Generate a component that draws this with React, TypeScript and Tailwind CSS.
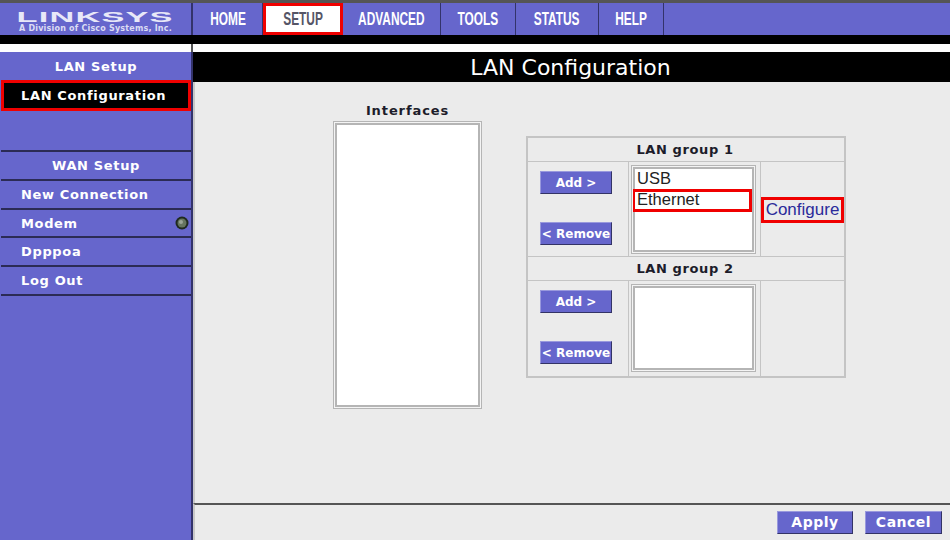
import React from 'react';

const navItems = [
  { label: 'HOME', width: 'w-[70px]' },
  { label: 'SETUP', width: 'w-[80px]', active: true },
  { label: 'ADVANCED', width: 'w-[98px]' },
  { label: 'TOOLS', width: 'w-[75px]' },
  { label: 'STATUS', width: 'w-[83px]' },
  { label: 'HELP', width: 'w-[65px]' },
];

const verdana = "font-['DejaVu_Sans',sans-serif] font-bold";

const PurpleButton = ({ label, className }: { label: string; className: string }) => (
  <div
    className={`${className} ${verdana} flex items-center justify-center bg-[#6666cc] border border-t-[#9999dd] border-l-[#9999dd] border-b-[#333366] border-r-[#333366] text-white`}
  >
    {label}
  </div>
);

const ListBox = ({ children, className }: { children?: React.ReactNode; className: string }) => (
  <div className={`${className} border-[4px] border-[#b5b5b5] outline outline-1 outline-[#f4f4f4] outline-offset-[-2px] bg-white font-['Liberation_Sans',sans-serif] text-[16.5px] leading-[20px] text-[#222] pl-[2px]`}>
    {children}
  </div>
);

const GroupHeader = ({ label }: { label: string }) => (
  <div className={`h-[24px] flex items-center justify-center border-b border-[#c4c4c4] ${verdana} text-[13px] text-[#1c1c2a] tracking-[0.6px] pr-[2px]`}>
    {label}
  </div>
);

const ButtonStack = ({ gap }: { gap: string }) => (
  <div className={`w-[101px] shrink-0 border-r border-[#c4c4c4] flex flex-col pl-[12px] pt-[9px] ${gap}`}>
    <PurpleButton label="Add >" className="w-[72px] h-[23px] text-[12px]" />
    <PurpleButton label="< Remove" className="w-[72px] h-[23px] text-[12px]" />
  </div>
);

const SideRow = ({ label, center, dot, height }: { label: string; center?: boolean; dot?: boolean; height: string }) => (
  <div
    className={`${height} flex items-center border-b-2 border-[#2b2b55] text-[13px] tracking-[0.65px] ${center ? 'justify-center' : 'pl-[20px]'} relative`}
  >
    {label}
    {dot && (
      <svg className="absolute right-[2px] top-[6px]" width="14" height="14" viewBox="0 0 14 14">
        <circle cx="7" cy="7" r="6.5" fill="#1f2a1f" />
        <circle cx="7" cy="7" r="4.5" fill="#66755f" />
        <circle cx="6" cy="6" r="2" fill="#9aa596" />
      </svg>
    )}
  </div>
);

export default function App() {
  return (
    <div className="w-[950px] h-[540px] overflow-hidden flex flex-col bg-white">
      {/* Top navigation */}
      <div className="h-[3px] bg-[#555]" />
      <div className="h-[32px] flex bg-[#6666cc] font-['Liberation_Sans',sans-serif]">
        <div className="w-[193px] shrink-0 border-r-2 border-[#33336b] flex flex-col items-center pt-[7px] text-white overflow-hidden">
          <div className="font-bold text-[14px] leading-[14px] tracking-[0.5px] scale-x-[2.45] mb-[1px] text-[#e8e8f8]">
            LINKSYS
          </div>
          <div className="font-['DejaVu_Sans',sans-serif] font-bold text-[8px] leading-[8px] tracking-[0.2px] text-[#dcdcf4] whitespace-nowrap">
            A Division of Cisco Systems, Inc.
          </div>
        </div>
        {navItems.map(item =>
          item.active ? (
            <div
              key={item.label}
              className={`${item.width} shrink-0 bg-white border-[3px] border-[#f00000] flex items-center justify-center font-bold text-[18px] text-[#555566]`}
            >
              <span className="scale-x-[0.66]">{item.label}</span>
            </div>
          ) : (
            <div
              key={item.label}
              className={`${item.width} shrink-0 border-r border-[#33336b] flex items-center justify-center font-bold text-[18px] text-white`}
            >
              <span className="scale-x-[0.66]">{item.label}</span>
            </div>
          )
        )}
        <div className="flex-1" />
      </div>
      <div className="h-[9px] bg-black" />
      <div className="h-[8px] flex">
        <div className="w-[191px] bg-white" />
        <div className="w-[2px] bg-[#555]" />
        <div className="flex-1 bg-white" />
      </div>

      <div className="flex-1 flex min-h-0">
        {/* Sidebar */}
        <div className={`w-[193px] shrink-0 bg-[#6666cc] border-r-2 border-[#33336b] text-white ${verdana} pl-[1px]`}>
          <div className="h-[28px] flex items-center justify-center pt-[2px] text-[13px] tracking-[0.65px]">LAN Setup</div>
          <div className="h-[31px] bg-black border-[3px] border-[#f00000] flex items-center pl-[17px] text-[13px] tracking-[0.65px]">
            LAN Configuration
          </div>
          <div className="h-[41px] border-b-2 border-[#2b2b55]" />
          <SideRow label="WAN Setup" center height="h-[29px]" />
          <SideRow label="New Connection" height="h-[29px]" />
          <SideRow label="Modem" dot height="h-[28px] pt-[1px]" />
          <SideRow label="Dpppoa" height="h-[29px]" />
          <SideRow label="Log Out" height="h-[29px]" />
        </div>

        {/* Main */}
        <div className="flex-1 flex flex-col min-w-0">
          <div className="h-[30px] bg-black flex items-center justify-center font-['DejaVu_Sans',sans-serif] text-[22px] text-white pr-[2px]">
            LAN Configuration
          </div>
          <div className="flex-1 bg-[#ebebeb] border-l-2 border-[#c8c8c8] flex items-start pl-[138px] min-h-0">
            <div className="w-[149px] shrink-0 flex flex-col items-center pt-[21px]">
              <div className={`${verdana} h-[19px] text-[13px] leading-[16px] text-[#1c1c2a] tracking-[0.9px]`}>Interfaces</div>
              <ListBox className="w-[149px] h-[288px] -mt-[1px]" />
            </div>
            <div className="ml-[44px] mt-[54px] w-[320px] border-2 border-[#c4c4c4] shrink-0">
              <GroupHeader label="LAN group 1" />
              <div className="h-[95px] flex border-b border-[#c4c4c4]">
                <ButtonStack gap="gap-[28px]" />
                <div className="w-[132px] shrink-0 border-r border-[#c4c4c4] pl-[2px] pt-[3px]">
                  <ListBox className="w-[125px] h-[89px]">
                    <div className="h-[20px] leading-[18px]">USB</div>
                    <div className="-ml-[5px] w-[120px] h-[23px] border-[3px] border-[#f00000] bg-white pl-[2px] leading-[15px]">Ethernet</div>
                  </ListBox>
                </div>
                <div className="flex-1 pt-[35px]">
                  <div className="w-[83px] h-[26px] border-[3px] border-[#f00000] flex items-center justify-center font-['Liberation_Sans',sans-serif] text-[17px] text-[#2a2a9a]">
                    Configure
                  </div>
                </div>
              </div>
              <GroupHeader label="LAN group 2" />
              <div className="h-[95px] flex">
                <ButtonStack gap="gap-[28px]" />
                <div className="w-[132px] shrink-0 border-r border-[#c4c4c4] pl-[2px] pt-[3px]">
                  <ListBox className="w-[125px] h-[88px]" />
                </div>
                <div className="flex-1" />
              </div>
            </div>
          </div>
          <div className="h-[37px] shrink-0 bg-[#ebebeb] border-l-2 border-l-[#c8c8c8] border-t-2 border-t-[#555] flex items-start justify-end pt-[6px] pr-[8px] gap-[12px]">
            <PurpleButton label="Apply" className="w-[76px] h-[23px] text-[14px] tracking-[0.5px]" />
            <PurpleButton label="Cancel" className="w-[77px] h-[23px] text-[14px] tracking-[0.5px]" />
          </div>
        </div>
      </div>
    </div>
  );
}
